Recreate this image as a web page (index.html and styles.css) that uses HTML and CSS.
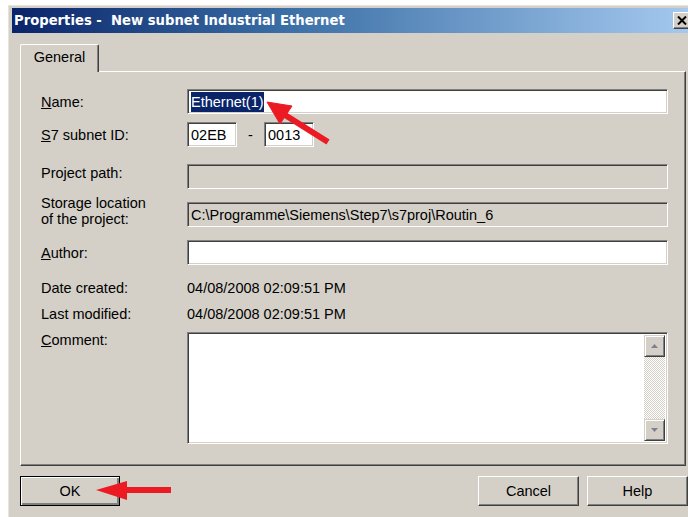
FILE: index.html
```html
<!DOCTYPE html>
<html>
<head>
<meta charset="utf-8">
<title>Properties - New subnet Industrial Ethernet</title>
<link rel="stylesheet" href="styles.css">
</head>
<body>
<div class="window">
  <div class="titlebar">
    <span class="title">Properties -&nbsp; New subnet Industrial Ethernet</span>
    <span class="close">
      <svg width="10" height="9" viewBox="0 0 10 9"><path d="M1 0.5 L9 8.5 M9 0.5 L1 8.5" stroke="#000" stroke-width="2" fill="none"/></svg>
    </span>
  </div>

  <div class="tabs">
    <div class="tab">General</div>
  </div>

  <div class="panel">
    <div class="row row-name">
      <label class="label"><u>N</u>ame:</label>
      <div class="field white wide"><span class="sel">Ethernet(1)</span></div>
    </div>
    <div class="row row-id">
      <label class="label"><u>S</u>7 subnet ID:</label>
      <div class="field white short">02EB</div>
      <span class="dash">-</span>
      <div class="field white short">0013</div>
    </div>
    <div class="row row-path">
      <label class="label up">Project path:</label>
      <div class="field gray wide"></div>
    </div>
    <div class="row row-storage">
      <label class="label two">Storage location<br>of the project:</label>
      <div class="field gray wide">C:\Programme\Siemens\Step7\s7proj\Routin_6</div>
    </div>
    <div class="row row-author">
      <label class="label"><u>A</u>uthor:</label>
      <div class="field white wide"></div>
    </div>
    <div class="row row-text row-created">
      <label class="label">Date created:</label>
      <span class="value">04/08/2008 02:09:51 PM</span>
    </div>
    <div class="row row-text">
      <label class="label">Last modified:</label>
      <span class="value">04/08/2008 02:09:51 PM</span>
    </div>
    <div class="row row-comment">
      <label class="label top"><u>C</u>omment:</label>
      <div class="field white wide memo">
        <div class="memo-text"></div>
        <div class="scrollbar">
          <div class="sbtn">
            <svg width="7" height="4" viewBox="0 0 7 4"><path d="M0 4 L3.5 0 L7 4 Z" fill="#7d8190"/></svg>
          </div>
          <div class="track"></div>
          <div class="sbtn">
            <svg width="7" height="4" viewBox="0 0 7 4"><path d="M0 0 L3.5 4 L7 0 Z" fill="#7d8190"/></svg>
          </div>
        </div>
      </div>
    </div>
  </div>

  <div class="buttons">
    <button class="btn default">OK</button>
    <span class="spacer"></span>
    <button class="btn">Cancel</button>
    <button class="btn">Help</button>
  </div>
</div>

<svg class="marks" width="688" height="517" viewBox="0 0 688 517">
  <g fill="#ec1b23" stroke="#ec1b23">
    <line x1="328" y1="142" x2="285" y2="115" stroke-width="6"/>
    <polygon points="267,102 292,106 280,124" stroke-width="1"/>
    <rect x="125" y="487" width="46" height="6" stroke="none"/>
    <polygon points="96,490 127,481 127,500" stroke="none"/>
  </g>
</svg>
</body>
</html>
```

FILE: styles.css
```css
html, body {
  margin: 0;
  padding: 0;
  background: #ffffff;
  overflow: hidden;
  width: 688px;
  height: 517px;
}

body {
  position: relative;
  font-family: "Liberation Sans", Arial, sans-serif;
  font-size: 14.5px;
  color: #000;
}

.window {
  margin: 5px 0 0 8px;
  width: 685px;
  height: 520px;
  box-sizing: border-box;
  background: #d4d0c8;
  border-top: 1px solid #e6e4df;
  border-left: 1px solid #e6e4df;
  padding: 2px 0 0 3px;
}

.titlebar {
  height: 25px;
  display: flex;
  align-items: center;
  background: linear-gradient(to right, #0a246a 0%, #3a6ea5 40%, #a6caf0 100%);
  padding-left: 2px;
}

.title {
  font-family: "DejaVu Sans", Verdana, sans-serif;
  font-weight: bold;
  font-size: 13.2px;
  color: #fff;
  flex: 1;
  white-space: pre;
}

.close {
  width: 17px;
  height: 17px;
  box-sizing: border-box;
  background: #d4d0c8;
  border-top: 1px solid #fff;
  border-left: 1px solid #fff;
  border-right: 1px solid #404040;
  border-bottom: 1px solid #404040;
  box-shadow: inset -1px -1px 0 #808080;
  display: flex;
  align-items: center;
  justify-content: center;
  margin-right: 3px;
}

.tabs {
  margin: 11px 0 0 8px;
  height: 27px;
  display: flex;
  position: relative;
  z-index: 1;
}

.tab {
  width: 79px;
  height: 28px;
  box-sizing: border-box;
  border-top: 1px solid #fff;
  border-left: 1px solid #fff;
  border-right: 1px solid #404040;
  box-shadow: inset -1px 0 0 #808080;
  border-radius: 2px 2px 0 0;
  background: #d4d0c8;
  display: flex;
  justify-content: center;
  padding-top: 4px;
}

.panel {
  margin-left: 8px;
  width: 666px;
  height: 395px;
  box-sizing: border-box;
  border-top: 1px solid #fff;
  border-left: 1px solid #fff;
  border-right: 1px solid #404040;
  border-bottom: 1px solid #404040;
  box-shadow: inset -1px -1px 0 #808080;
  padding: 17px 0 0 20px;
}

.row {
  display: flex;
  align-items: center;
}

.label {
  width: 146px;
  flex: none;
  line-height: 16px;
}

.label.up { align-self: flex-start; padding-top: 1px; }
.label.two { align-self: flex-start; margin-top: -7px; }
.label.top { align-self: flex-start; padding-top: 0; }

.row-id { margin-top: 8px; }
.row-path { margin-top: 17px; }
.row-storage { margin-top: 13px; }
.row-author { margin-top: 13px; }
.row-created { margin-top: 13px; }
.row-text { height: 20px; margin-bottom: 6px; }
.row-comment { margin-top: 8px; }

.field {
  height: 25px;
  box-sizing: border-box;
  border-top: 1px solid #808080;
  border-left: 1px solid #808080;
  border-right: 1px solid #fff;
  border-bottom: 1px solid #fff;
  box-shadow: inset 1px 1px 0 #404040, inset -1px -1px 0 #d4d0c8;
  padding: 0 3px 0 3px;
  display: flex;
  align-items: center;
  white-space: nowrap;
}

.white { background: #fff; }
.gray { background: #d4d0c8; }
.wide { width: 481px; }
.short { width: 50px; }

.dash {
  width: 27px;
  text-align: center;
}

.sel {
  background: #0a246a;
  color: #fff;
  line-height: 20px;
}

.memo {
  height: 112px;
  padding: 2px;
  align-items: stretch;
}

.memo-text { flex: 1; }

.scrollbar {
  width: 21px;
  display: flex;
  flex-direction: column;
}

.sbtn {
  height: 22px;
  box-sizing: border-box;
  background: #d4d0c8;
  border-top: 1px solid #d4d0c8;
  border-left: 1px solid #d4d0c8;
  border-right: 1px solid #404040;
  border-bottom: 1px solid #404040;
  box-shadow: inset 1px 1px 0 #fff, inset -1px -1px 0 #808080;
  display: flex;
  align-items: center;
  justify-content: center;
}

.track {
  flex: 1;
  background: repeating-conic-gradient(#d4d0c8 0 25%, #fff 0 50%) 0 0 / 2px 2px;
}

.buttons {
  display: flex;
  margin: 10px 0 0 8px;
  width: 668px;
}

.spacer { flex: 1; }

.btn {
  width: 101px;
  height: 30px;
  box-sizing: border-box;
  font-family: "Liberation Sans", Arial, sans-serif;
  font-size: 14.5px;
  color: #000;
  background: #d4d0c8;
  border-top: 1px solid #fff;
  border-left: 1px solid #fff;
  border-right: 1px solid #404040;
  border-bottom: 1px solid #404040;
  box-shadow: inset -1px -1px 0 #808080;
  padding: 0;
  margin-left: 8px;
  flex: none;
}

.btn.default {
  width: 100px;
  margin-left: 0;
  border: 1px solid #000;
  box-shadow: inset 1px 1px 0 #fff, inset -2px -2px 0 #808080;
}

.marks {
  position: absolute;
  left: 0;
  top: 0;
  pointer-events: none;
}
```
